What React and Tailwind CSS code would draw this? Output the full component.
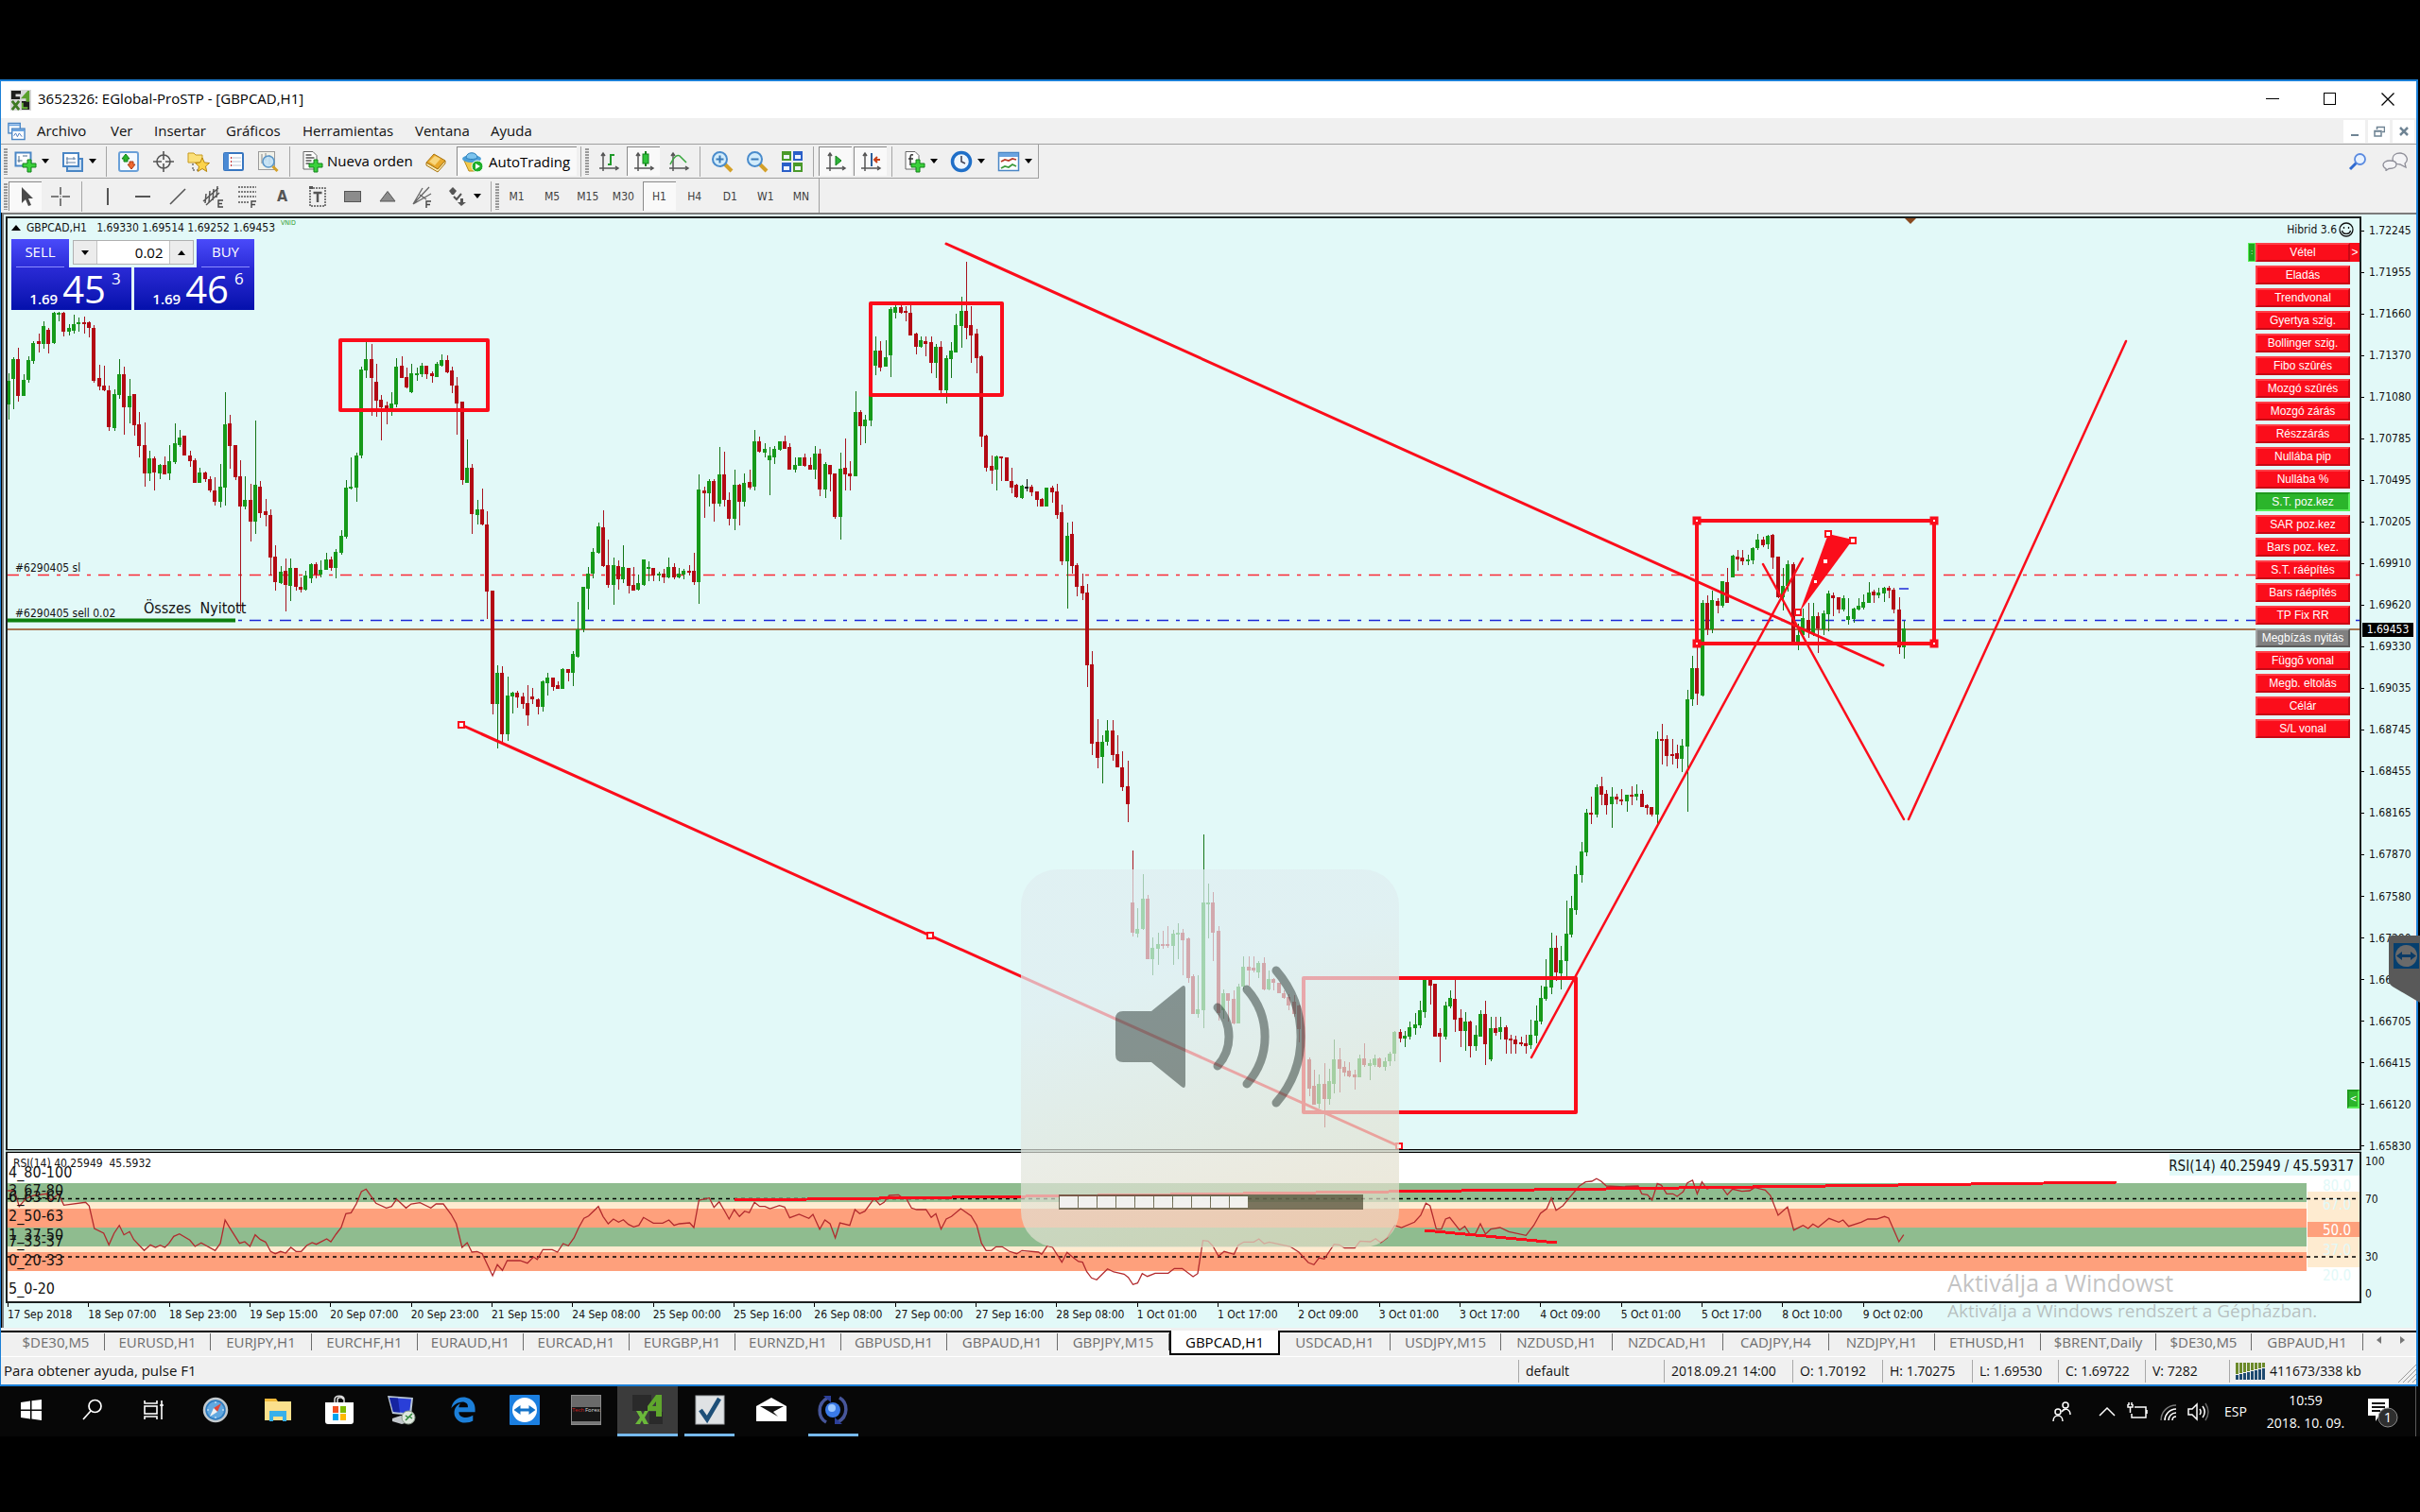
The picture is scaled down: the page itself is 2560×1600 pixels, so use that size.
import React from "react";
import { FaEdgeLegacy } from "react-icons/fa";

const UI = "font-['Open_Sans','Noto_Sans',sans-serif]";
const TAHOMA = "font-['DejaVu_Sans_Condensed','DejaVu_Sans',sans-serif]";

/* ---------- chart data ---------- */

const BAR_STEP = 16 / 3;
const FIRST_BAR = 8.6;

// colour, high, body top, body bottom, low. Every block has its own base and scale
const blocks = [
  {
    start: 0,
    base: 320,
    scale: 3,
    bars: `g225,248,323,372 g175,180,242,340 r144,180,296,316 g228,246,296,296 g172,184,246,255 g124,128,187,195 r100,124,132,158
      g60,76,132,148 r80,88,132,163 g30,32,128,132 g30,32,34,60 r30,32,93,108 g68,80,92,104 g40,68,90,100 g48,64,70,92 r46,64,68,100
      r60,64,82,112 r72,80,248,256 r198,240,268,280 r200,264,280,283 r264,280,396,407 g276,292,398,407 g180,228,294,307 r204,228,332,420
      g244,296,332,384 r292,292,391,424 r348,388,455,492 r380,452,543,584 g472,496,543,567 r488,496,540,596 g512,516,544,560
      r488,516,545,545 g452,504,544,563 g384,448,507,512 g404,428,452,460 r424,424,487,487 r472,485,504,523 r496,500,572,572
      g524,540,572,572 r536,540,561,570 r552,560,598,603 r556,596,632,644 g512,584,632,652 g284,388,587,644 r356,384,455,528
      r452,452,555,563 r500,552,648,980 g552,628,648,656 r576,628,696,760 g376,580,696,736 r568,584,668,684 r624,664,676,712
      r656,676,811,866 r772,808,887,915 g836,856,891,895 r812,852,896,980 g812,844,899,948 r844,844,904,915 r872,904,912,920
      g852,868,912,915 g828,832,875,891 r824,832,864,876 g820,848,864,872 g796,816,848,848 r808,816,844,852 g784,792,843,876
      g724,740,795,800 g564,588,743,751 g492,584,592,595 g476,485,587,632 g204,212,487,495 g126,180,215,240 r132,180,240,360
      r196,252,312,363 r295,308,332,437 r316,328,343,388 g284,320,343,360 g176,204,323,332 r172,200,240,240 r208,236,271,273
      g196,224,285,288 g208,224,228,248 g192,200,228,236 r200,200,228,244 r220,224,235,256 g188,196,236,236 g164,184,200,204
      r168,184,222,224 r204,216,264,288 r236,264,320,420 r316,316,564,580 g436,524,572,572 r512,524,672,736 g628,656,675,704
      r592,656,704,708 r664,704,919,1004 r916,916,1276,1308 g1152,1176,1276,1415 r1156,1176,1370,1395 g1188,1248,1370,1391
      g1236,1240,1250,1304 r1232,1240,1255,1288 r1240,1252,1276,1291 r1216,1272,1311,1343 r1224,1252,1260,1276 r1256,1260,1284,1308
      g1200,1204,1284,1300 g1176,1192,1208,1248 r1192,1192,1220,1232 r1204,1216,1227,1228 g1160,1164,1227,1228 r1164,1164,1176,1204
      g1108,1116,1175,1219 g952,1037,1124,1128 g904,904,1037,1048 g840,860,908,976 g780,792,862,875 g700,712,795,797`,
  },
  {
    start: 118,
    base: 240,
    scale: 2.45,
    bars: `r736,778,880,882 r810,876,928,937 g858,876,928,980 r866,880,914,942 g826,882,914,924 r884,884,930,951 r882,928,943,943
      g902,924,941,944 g862,862,928,931 g868,882,888,918 r884,884,904,918 g894,898,904,918 r886,898,908,924 g858,882,908,912
      r872,882,908,914 g884,898,908,911 g888,892,902,914 r876,891,894,904 r846,892,920,928 g643,682,920,977 r673,684,692,755
      g654,660,692,725 r654,660,718,764 g572,643,718,724 r582,643,709,724 r688,707,757,773 g630,670,757,787 r666,670,714,774
      g640,663,714,725 r630,662,676,680 g526,556,673,683 r545,555,582,586 g562,576,586,598 g572,594,604,696 g568,576,598,614
      g555,556,578,581 r541,555,575,575 r562,572,630,630 g599,617,630,636 g598,598,620,620 r588,598,620,622 r598,617,630,630
      g568,588,630,655 r575,588,680,699 g611,616,680,702 r617,617,643,686 r640,640,751,757 g585,626,751,810 r548,624,643,683
      r607,640,647,683 g427,480,646,647 r476,480,518,565 g488,500,518,562 g430,437,502,518 g284,320,359,385 r297,320,364,376
      g294,337,362,362 g208,212,332,389 g202,208,223,238 r202,208,223,225 r206,218,224,244 r202,222,281,281 r275,278,310,330
      g284,294,310,314 r284,296,304,336 r284,300,352,379 g304,310,352,391 r296,310,424,432 g332,341,424,457 g300,320,343,391
      g225,255,326,326 g182,219,258,314 r91,219,261,291 r206,255,281,353 r265,278,340,379 r333,336,545,572 r539,541,624,634
      r594,620,633,666 g594,595,630,683 r595,595,600,659 r598,598,660,660 r624,660,676,692 r666,670,701,703 g670,672,702,706
      k654,674,677,686 r670,673,689,699 r686,686,708,725 r702,706,725,725 g676,677,724,725 r672,676,689,715 r666,686,748,757
      r721,741,868,876 g768,800,868,990 r764,797,880,898 r872,876,934,957 r898,932,951,967 r925,948,1137,1192 r1101,1134,1339,1369
      r1276,1336,1378,1404 g1317,1336,1374,1443 g1280,1307,1336,1345 r1280,1307,1369,1385 r1317,1366,1401,1401 r1359,1401,1453,1463
      r1385,1450,1496,1544`,
  },
  {
    start: 223,
    base: 860,
    scale: 3,
    bars: `r120,284,380,392 g304,368,384,396 g196,272,368,372 r260,272,464,464 g396,430,464,516 g380,416,432,484 r376,416,420,432
      r360,418,424,430 g372,384,424,484 g352,380,388,464 r368,380,404,516 r396,400,524,540 r512,520,640,640 g516,624,640,652
      g68,284,627,684 g224,284,288,400 r252,284,380,472 r360,376,636,660 g560,572,628,655 r572,572,596,664 r564,592,668,672
      g544,552,668,670 g456,488,552,560 r456,488,500,548 r456,492,500,508 g472,476,508,525 r460,476,560,564 g500,528,560,564
      r524,528,540,564 r540,540,572,572 r564,572,588,592 r576,585,612,628 r580,600,640,648 r608,612,688,728 r688,690,780,800
      r776,784,876,900 r816,868,928,928 g832,860,924,940 r796,860,908,1000 g812,852,908,928 g720,784,860,892 r748,784,812,888
      r788,808,824,836 r792,820,836,840 r816,832,840,880 g768,780,840,840 r732,780,800,808 g784,796,804,848 g768,780,800,808
      r776,780,808,810 g776,788,808,820 g760,764,790,804 g692,696,764,788 r688,696,716,730 g692,708,716,743 g664,680,710,720
      g636,672,684,704 g596,628,676,684 g530,530,632,652 r530,532,548,608 r544,544,710,712 r684,700,711,792 g600,612,712,720
      g564,588,616,620 r528,592,656,696 r624,652,692,744 g632,664,692,756 r660,664,740,776 g676,704,740,756 g628,640,711,712
      r596,640,736,800 g648,684,784,788 r648,684,700,708 g648,680,696,720 r676,680,720,764 r704,716,724,764 r708,720,734,764
      r712,728,736,740 r704,732,740,764`,
  },
  {
    start: 302,
    base: 500,
    scale: 2.376,
    bars: `g1375,1413,1440,1450 g1340,1378,1415,1435 g1289,1320,1381,1387 g1223,1292,1324,1327 g1156,1194,1295,1311 r1165,1194,1257,1279
      g1190,1226,1260,1299 g1077,1159,1228,1267 g1064,1096,1162,1168 g988,1010,1099,1112 g928,953,1013,1032 g846,856,956,965
      r814,855,860,884 g785,792,860,868 r764,789,811,836 r798,808,836,859 g792,814,833,893 r809,814,823,833 r795,821,825,837
      g811,811,826,852 r789,811,816,836 g785,808,814,824 r798,808,842,842 r834,836,843,859 r840,842,861,865 g652,669,860,890
      r633,671,674,735 r661,671,713,738 r671,709,713,735 r684,706,721,744 g669,687,721,754 g547,570,690,852 g462,491,570,588
      r430,491,557,585 g320,329,560,564 r310,329,395,408 g298,320,395,403 r317,323,335,354 g273,273,335,340 r241,276,329,329
      g206,209,263,263 r196,211,218,247 r196,214,224,234 g206,219,224,234 g187,189,221,231 g155,168,190,194 r162,168,184,187
      g158,160,181,193 r155,158,214,243 r212,212,314,316 g241,285,314,348 g222,231,285,300 r225,231,425,428 g380,408,431,446
      g342,367,409,418 r329,370,400,415 g329,361,405,412 r352,361,393,453 g348,355,395,409 g298,304,357,400 r301,308,316,361
      r314,314,345,354 g310,317,344,350 g317,361,370,382 g339,342,368,377 g317,336,344,347 g307,326,340,345 g276,301,328,328
      r295,299,308,329 g291,302,308,316 g288,291,304,326 r285,291,297,316 r291,295,345,354 r314,345,440,456 g373,393,440,468`,
  },
];

const candles = blocks.flatMap(({ start, base, scale, bars }) =>
  bars.split(/\s+/).map((bar, i) => {
    const [high, top, bottom, low] = bar
      .slice(1)
      .split(",")
      .map((v) => Math.round(base + Number(v) / scale));
    return { x: Math.round(FIRST_BAR + (start + i) * BAR_STEP), kind: bar[0], high, top, bottom, low };
  })
);

const candleFill = { g: "#169a1a", r: "#b30a14", k: "#111111" };
const candleWick = { g: "#147518", r: "#a8141e", k: "#111111" };

// [x origin, points]
const rsiParts = [
  [
    0,
    `15,180 28,180 37,230 50,205 65,195 90,190 98,210 113,190 123,226 165,217 172,228 182,300 200,315 210,352 220,315 230,290 239,320
     250,310 258,335 278,370 290,352 300,360 309,353 318,360 326,347 335,325 346,317 366,337 376,357 388,346 415,370 425,347 434,273
     442,295 462,347 472,342 482,357 492,320 502,335 512,343 522,373 531,380 541,373 551,378 561,360 571,373 581,373 592,353 602,345
     610,350 630,333 638,342 648,318 658,297 667,253 677,250 687,222 697,183 706,175 725,220 745,235 755,230 765,207 783,235 793,222
     810,218 831,235 841,222 855,222 870,255 880,285 891,360 901,345 910,375 920,373 930,380 950,450 959,415 969,433 978,402 1003,402
     1017,410 1029,390 1036,398 1047,367 1065,367 1075,375 1086,348 1096,355 1107,330 1116,297 1126,268 1135,260 1154,230 1163,262
     1173,285 1183,270 1193,280 1202,272 1212,287 1222,295 1232,290 1241,265 1260,283 1278,283 1290,273 1300,290 1310,285 1330,282
     1338,297 1348,210 1368,203 1377,233 1387,215 1397,243 1406,270 1416,240 1426,262 1436,245 1445,250 1455,217 1465,230 1475,230
     1485,237 1503,227 1513,232 1523,266 1541,255 1560,268`,
  ],
  [
    860,
    `0,255 13,302 23,273 33,285 43,330 52,282 71,290 81,240 90,253 100,245 118,205 129,225 137,217 147,195 165,193 172,202 180,205
     190,235 200,240 218,240 228,265 237,253 247,302 257,270 267,262 285,237 305,260 316,290 325,347 334,370 344,370 353,358 365,358
     378,372 393,380 403,370 435,375 441,382 452,355 462,360 480,407 490,376 500,390 512,405 520,407 528,437 537,457 547,463 568,428
     580,438 600,445 608,455 617,478 626,473 635,443 645,452 660,442 685,442 697,427 712,427 733,453 742,443 752,338 762,340 771,355
     782,388 793,373 812,382 820,353 831,343 850,343 860,333 870,348 880,343 905,352 920,357 937,375 955,408 966,415 976,393 986,397
     1005,350 1015,352 1025,362 1045,362 1055,340 1075,342 1085,332 1095,345 1107,330 1122,290 1135,297 1160,280 1172,258 1182,220
     1190,228 1202,302 1212,302 1220,270 1228,265 1247,305 1257,293 1267,318 1277,318 1287,285 1297,318 1307,302 1325,297 1342,310
     1375,322 1390,290 1403,252 1415,237 1424,203 1433,242 1446,228 1460,200 1478,165 1490,152 1502,150 1511,142 1520,150 1530,165 1565,168`,
  ],
  [
    1700,
    `36,166 60,165 67,190 78,193 87,210 97,157 105,163 115,190 127,190 135,198 147,183 155,155 165,147 174,190 183,152 193,175 203,168
     222,170 232,193 242,175 260,182 275,180 285,170 305,178 315,195 330,258 348,232 360,305 378,290 388,300 397,286 407,296 428,268
     447,280 455,273 466,293 490,280 503,270 520,270 535,262 543,267 563,342 572,320`,
  ],
];

const rsiPoints = rsiParts
  .flatMap(([x0, pts]) =>
    pts.split(/\s+/).map((p) => {
      const [x, y] = p.split(",").map(Number);
      return `${(x0 + x / 1.823).toFixed(1)},${(1200 + y / 3).toFixed(1)}`;
    })
  )
  .join(" ");

const prices = [
  "1.72245", "1.71955", "1.71660", "1.71370", "1.71080", "1.70785", "1.70495", "1.70205",
  "1.69910", "1.69620", "1.69330", "1.69035", "1.68745", "1.68455", "1.68165", "1.67870",
  "1.67580", "1.67290", "1.66995", "1.66705", "1.66415", "1.66120", "1.65830",
];

const times = [
  "17 Sep 2018", "18 Sep 07:00", "18 Sep 23:00", "19 Sep 15:00", "20 Sep 07:00", "20 Sep 23:00",
  "21 Sep 15:00", "24 Sep 08:00", "25 Sep 00:00", "25 Sep 16:00", "26 Sep 08:00", "27 Sep 00:00",
  "27 Sep 16:00", "28 Sep 08:00", "1 Oct 01:00", "1 Oct 17:00", "2 Oct 09:00", "3 Oct 01:00",
  "3 Oct 17:00", "4 Oct 09:00", "5 Oct 01:00", "5 Oct 17:00", "8 Oct 10:00", "9 Oct 02:00",
];

const panelButtons = [
  "Vétel", "Eladás", "Trendvonal", "Gyertya szig.", "Bollinger szig.", "Fibo szûrés", "Mozgó szûrés",
  "Mozgó zárás", "Részzárás", "Nullába pip", "Nullába %", "S.T. poz.kez", "SAR poz.kez", "Bars poz. kez.",
  "S.T. ráépítés", "Bars ráépítés", "TP Fix RR", "Megbízás nyitás", "Függõ vonal", "Megb. eltolás",
  "Célár", "S/L vonal",
];

const tabs = [
  ["$DE30,M5", "w-[103px]"], ["EURUSD,H1", "w-28"], ["EURJPY,H1", "w-[107px]"], ["EURCHF,H1", "w-28"],
  ["EURAUD,H1", "w-28"], ["EURCAD,H1", "w-28"], ["EURGBP,H1", "w-28"], ["EURNZD,H1", "w-28"],
  ["GBPUSD,H1", "w-28"], ["GBPAUD,H1", "w-[117px]"], ["GBPJPY,M15", "w-[118px]"], ["GBPCAD,H1", "w-[117px]"],
  ["USDCAD,H1", "w-[117px]"], ["USDJPY,M15", "w-[117px]"], ["NZDUSD,H1", "w-[118px]"], ["NZDCAD,H1", "w-[117px]"],
  ["CADJPY,H4", "w-28"], ["NZDJPY,H1", "w-28"], ["ETHUSD,H1", "w-28"], ["$BRENT,Daily", "w-[122px]"],
  ["$DE30,M5", "w-[101px]"], ["GBPAUD,H1", "w-[118px]"],
];

/* ---------- toolbar icons ---------- */

const Icon = ({ children, size = "h-6 w-6" }) => (
  <svg viewBox="0 0 24 24" className={`${size} shrink-0`} fill="none" aria-hidden="true">
    {children}
  </svg>
);

const Plus = () => (
  <path d="M14 10h4v4h5v4h-5v5h-4v-5H9v-4h5z" fill="#3bd13b" stroke="#12801a" />
);

const Axes = () => <path d="M6 3v19M2 19h20M4 6l2-3 2 3M19 17l3 2-3 2" stroke="#555" strokeWidth="1.5" />;

const icons = {
  newChart: (
    <Icon>
      <rect x="1.5" y="2.5" width="16" height="14" fill="#fff" stroke="#4a86c5" strokeWidth="2" />
      <path d="M5 6v7M3.500 11h5M9 6h5" stroke="#4a6a8a" />
      <Plus />
    </Icon>
  ),
  profiles: (
    <Icon>
      <rect x="6" y="9" width="16" height="13" fill="#c9def2" stroke="#4a86c5" strokeWidth="2" />
      <rect x="2" y="3" width="16" height="14" fill="#fff" stroke="#4a86c5" strokeWidth="2" />
      <path d="M5 9h10M5 13h10M6 7v8M13 7v3" stroke="#5d7fa5" />
    </Icon>
  ),
  market: (
    <Icon>
      <rect x="2" y="2" width="20" height="20" rx="2" fill="#f4f9ff" stroke="#6aa0d8" strokeWidth="2" />
      <path d="M9 4l4 5h-2v3H7V9H5z" fill="#28b428" stroke="#12801a" />
      <path d="M15 20l-4-5h2v-3h4v3h2z" fill="#f06a30" stroke="#b03a10" />
    </Icon>
  ),
  crosshair: (
    <Icon>
      <circle cx="12" cy="12" r="7" stroke="#555" strokeWidth="1.6" />
      <path d="M12 1v9M12 14v9M1 12h9M14 12h9" stroke="#555" strokeWidth="1.6" />
    </Icon>
  ),
  favorites: (
    <Icon>
      <path d="M1 3h6l2 2h7v8H1z" fill="#fbe07a" stroke="#c79a20" />
      <path d="M6 14v8M6 21h5" stroke="#333" strokeDasharray="2 2" />
      <path d="M16 8l2.300 5 5.200.5-4 3.500 1.200 5.500-4.700-3-4.700 3 1.200-5.500-4-3.500 5.200-.5z" fill="#fcd34a" stroke="#b8860b" />
    </Icon>
  ),
  navigator: (
    <Icon>
      <rect x="2" y="3" width="20" height="18" rx="1" fill="#fff" stroke="#3776c0" strokeWidth="2" />
      <path d="M2 3h5v18H2z" fill="#4a8ad4" />
      <path d="M10 8h10M10 12h10M10 16h10" stroke="#b8c4d4" />
      <path d="M9 8h1M9 12h1M9 16h1" stroke="#d03030" strokeWidth="2" />
    </Icon>
  ),
  tester: (
    <Icon>
      <rect x="1.500" y="1.500" width="17" height="19" fill="#f2f2ea" stroke="#9a9a9a" />
      <path d="M5 4v10M9 3v8M13 5v10" stroke="#888" />
      <circle cx="12" cy="12" r="6" fill="#bfe0f6" fillOpacity=".85" stroke="#5a96c8" strokeWidth="1.600" />
      <path d="M16.500 17l5 5" stroke="#d4a028" strokeWidth="3" />
    </Icon>
  ),
  order: (
    <Icon>
      <path d="M3 1.500h10l4 4V20H3z" fill="#fff" stroke="#666" />
      <path d="M5.500 5h6M5.500 8h9M5.500 11h6M5.500 14h4" stroke="#555" strokeWidth="1.500" />
      <Plus />
    </Icon>
  ),
  book: (
    <Icon>
      <path d="M2 13l8-9 12 7-8 9z" fill="#e9a92c" stroke="#a87410" />
      <path d="M5 12l6-6 6 3-6 7z" fill="#f8d67c" />
      <path d="M2 13l12 7 8-9v3l-8 9-12-7z" fill="#fbeab0" stroke="#a87410" />
    </Icon>
  ),
  auto: (
    <Icon>
      <path d="M3 11h16l-4 11H8z" fill="#f2c94c" stroke="#b88a1a" />
      <ellipse cx="11" cy="9" rx="10" ry="4" fill="#4a9fd8" />
      <path d="M5 8c0-7 12-7 12 0-3 2-9 2-12 0z" fill="#7cc4ee" stroke="#2f7fb8" />
      <circle cx="17" cy="17" r="6" fill="#1fae2a" stroke="#fff" />
      <path d="M15 14v6l5-3z" fill="#fff" />
    </Icon>
  ),
  bars: (
    <Icon>
      <Axes />
      <path d="M14 4v12M14 5h4M11 15h3" stroke="#1f9a2a" strokeWidth="2" />
    </Icon>
  ),
  candle: (
    <Icon>
      <Axes />
      <path d="M14 1v16" stroke="#12801a" strokeWidth="2" />
      <rect x="11" y="4" width="6" height="10" fill="#2fc43a" stroke="#12801a" />
    </Icon>
  ),
  line: (
    <Icon>
      <Axes />
      <path d="M3 15c4-8 8-12 11-8l6 6" stroke="#3aa83f" strokeWidth="1.600" />
    </Icon>
  ),
  zoomIn: (
    <Icon>
      <path d="M14 14l8 8" stroke="#d4a028" strokeWidth="4" />
      <circle cx="9.500" cy="9.500" r="7.500" fill="#d2ecfb" stroke="#4a8ccc" strokeWidth="2" />
      <path d="M5.500 9.500h8M9.500 5.500v8" stroke="#3a7ab8" strokeWidth="2" />
    </Icon>
  ),
  zoomOut: (
    <Icon>
      <path d="M14 14l8 8" stroke="#d4a028" strokeWidth="4" />
      <circle cx="9.500" cy="9.500" r="7.500" fill="#d2ecfb" stroke="#4a8ccc" strokeWidth="2" />
      <path d="M5.500 9.500h8" stroke="#3a7ab8" strokeWidth="2" />
    </Icon>
  ),
  tile: (
    <Icon>
      <path d="M1 1h10v10H1zM13 13h10v10H13z" fill="#4a9a2a" />
      <path d="M13 1h10v10H13zM1 13h10v10H1z" fill="#2a5fc8" />
      <path d="M3 5h6v4H3zM15 5h6v4h-6zM3 17h6v4H3zM15 17h6v4h-6z" fill="#eef4ff" />
    </Icon>
  ),
  scroll: (
    <Icon>
      <Axes />
      <path d="M12 6v10l6-5z" fill="#2fb43a" stroke="#12801a" />
    </Icon>
  ),
  shift: (
    <Icon>
      <Axes />
      <path d="M13 3v14" stroke="#2a5f9a" strokeWidth="2" />
      <path d="M22 10h-6M19 7l-3 3 3 3" stroke="#c84018" strokeWidth="2" />
    </Icon>
  ),
  indicators: (
    <Icon>
      <path d="M3 1.500h10l4 4V20H3z" fill="#fff" stroke="#666" />
      <path d="M11 5c-3-1-3 1-3 4v7M6 9h5" stroke="#333" strokeWidth="1.500" />
      <Plus />
    </Icon>
  ),
  clock: (
    <Icon>
      <circle cx="12" cy="12" r="9.500" fill="#eef6fd" stroke="#1f6fc8" strokeWidth="3.500" />
      <path d="M12 6v6l4 2" stroke="#445" strokeWidth="1.600" />
    </Icon>
  ),
  template: (
    <Icon>
      <rect x="1.500" y="2.500" width="21" height="19" fill="#fff" stroke="#4a86c5" strokeWidth="1.500" />
      <path d="M2 3h20v4H2z" fill="#6aa4e0" />
      <path d="M4 12l4-2 4 1 4-2 4 1" stroke="#b83a28" strokeWidth="1.800" />
      <path d="M4 19l4-2 4 1 4-3 4 2" stroke="#3a9a3a" strokeWidth="1.800" />
    </Icon>
  ),
  cursor: (
    <Icon>
      <path d="M8 2v17l4-4 3 7 3-1-3-7h5z" fill="#4a4a4a" />
    </Icon>
  ),
  cross: (
    <Icon>
      <path d="M12 2v8M12 14v8M2 12h8M14 12h8M12 11.500v1" stroke="#555" strokeWidth="1.500" />
    </Icon>
  ),
  vline: <Icon><path d="M12 3v18" stroke="#555" strokeWidth="2" /></Icon>,
  hline: <Icon><path d="M4 12h16" stroke="#555" strokeWidth="2" /></Icon>,
  trend: <Icon><path d="M4 20L20 4" stroke="#555" strokeWidth="1.600" /></Icon>,
  channel: (
    <Icon>
      <path d="M2 17L18 3M5 21L19 8M5 9l-1 10M9 6l-1 12M13 4l-1 12M17 1l-1 12" stroke="#555" strokeWidth="1.500" />
      <path d="M23 16h-5v7h5M18 19.500h4" stroke="#444" strokeWidth="1.400" />
    </Icon>
  ),
  fibo: (
    <Icon>
      <path d="M2 2h19M2 7h19M2 12h19M2 18h11" stroke="#555" strokeWidth="1.500" strokeDasharray="2 1" />
      <path d="M16 24v-7h5M16 20.500h4" stroke="#444" strokeWidth="1.400" />
    </Icon>
  ),
  label: (
    <Icon>
      <rect x="4" y="3" width="16" height="19" stroke="#555" strokeWidth="1.500" strokeDasharray="2 1" />
      <path d="M7.500 8h9M12 8v10" stroke="#555" strokeWidth="2.500" />
      <path d="M3 1h4v3H3z" fill="#555" />
    </Icon>
  ),
  rect: <Icon><rect x="3.500" y="6.500" width="17" height="11" fill="#8c8c8c" stroke="#555" /></Icon>,
  triangle: <Icon><path d="M12 6.500L20 17H4z" fill="#8c8c8c" stroke="#555" /></Icon>,
  fan: (
    <Icon>
      <path d="M2 20L19 2M2 20L12 3M2 20L21 9M9 10l7 5" stroke="#666" strokeWidth="1.300" />
      <path d="M16 24v-7h5M16 20.500h4" stroke="#444" strokeWidth="1.400" />
    </Icon>
  ),
  arrows: (
    <Icon>
      <path d="M7 2l4 4-3 4H6L3 6zM16 22l-4-4h3v-4h3v4h3z" fill="#555" />
      <path d="M8 12l3 3 5-6" stroke="#555" strokeWidth="2" />
    </Icon>
  ),
};

const Caret = () => (
  <svg viewBox="0 0 8 5" className="h-[5px] w-2 shrink-0" aria-hidden="true">
    <path d="M0 0h8L4 5z" fill="#000" />
  </svg>
);

const Grip = () => (
  <span className="h-7 w-1 shrink-0 bg-[repeating-linear-gradient(to_bottom,#9a9a9a_0_2px,transparent_2px_3px)]" />
);

const Sep = () => <span className="mx-1 h-8 w-px shrink-0 bg-[#a5a5a5]" />;

const Tool = ({ icon, label, pressed, drop, text }) => (
  <button
    type="button"
    aria-label={label}
    className={`mx-px flex h-[31px] shrink-0 items-center justify-center ${drop ? "w-12 gap-[5px]" : "w-[35px]"} ${
      pressed ? "border-t border-l border-[#8a8a8a] bg-[#f9f9f9]" : ""
    }`}
  >
    {text ? <span className="text-[12px] text-[#404040]">{text}</span> : icons[icon]}
    {drop && <Caret />}
  </button>
);

const TitleBar = () => (
  <header className="flex h-[39px] items-center bg-white pl-[10px]">
    <svg viewBox="0 0 24 24" className="h-6 w-[22px]" aria-hidden="true">
      <rect width="24" height="24" fill="#d8d8d8" />
      <path d="M1 1h11v4H6v3h5v3H1zM13 13h9v10h-9z" fill="#1d1d1b" />
      <path d="M20 1l-8 9h6v4h4V1z" fill="#5aa02c" />
      <path d="M2 13l8 10M10 13L2 23" stroke="#3f7a22" strokeWidth="3" />
      <path d="M14 15v6h6" stroke="#6ab83a" strokeWidth="2" fill="none" />
    </svg>
    <h1 className="ml-[7px] pb-0.5 text-[15px] text-black">3652326: EGlobal-ProSTP - [GBPCAD,H1]</h1>
    <div className="ml-auto flex items-center pb-0.5">
      <button type="button" aria-label="Minimizar" className="flex h-9 w-[61px] items-center justify-center">
        <span className="h-px w-[14px] bg-black" />
      </button>
      <button type="button" aria-label="Maximizar" className="flex h-9 w-[61px] items-center justify-center">
        <span className="h-[13px] w-[13px] border border-black" />
      </button>
      <button type="button" aria-label="Cerrar" className="flex h-9 w-[61px] items-center justify-center">
        <svg viewBox="0 0 14 14" className="h-[14px] w-[14px]">
          <path d="M.5.500l13 13M13.500.500l-13 13" stroke="#000" strokeWidth="1.300" />
        </svg>
      </button>
    </div>
  </header>
);

const menuItems = [
  ["Archivo", "w-[78px]"], ["Ver", "w-[46px]"], ["Insertar", "w-[76px]"], ["Gráficos", "w-[81px]"],
  ["Herramientas", "w-[119px]"], ["Ventana", "w-20"], ["Ayuda", "w-16"],
];

const MenuBar = () => (
  <nav className="flex h-7 items-center border-b border-[#a0a0a0] bg-[#f0f0f0] pl-[7px]">
    <svg viewBox="0 0 20 20" className="mr-3 h-5 w-[19px]" aria-hidden="true">
      <rect x="1" y="1" width="13" height="11" fill="#fff" stroke="#4a86c5" strokeWidth="1.500" />
      <rect x="5" y="7" width="14" height="12" fill="#fff" stroke="#4a86c5" strokeWidth="1.500" />
      <path d="M7 15l2-3 2 4 2-4 3 4" stroke="#4a7ac0" fill="none" />
      <path d="M1 3h13M5 9h14" stroke="#6aa4e0" strokeWidth="2" />
    </svg>
    {menuItems.map(([item, width]) => (
      <button key={item} type="button" className={`${width} text-left text-[15px] leading-none text-[#111]`}>
        {item}
      </button>
    ))}
    <div className="ml-auto flex gap-[3px] pr-0.5">
      <button type="button" aria-label="Minimizar ventana" className="flex h-6 w-[23px] items-end justify-center bg-white pb-[7px]">
        <span className="h-0.5 w-2 bg-[#6f8494]" />
      </button>
      <button type="button" aria-label="Restaurar ventana" className="flex h-6 w-[23px] items-center justify-center bg-white">
        <svg viewBox="0 0 12 12" className="h-3 w-3" fill="none" stroke="#6f8494" strokeWidth="1.500">
          <path d="M3.500 4V1.500h8v5H9M1 5.500h7V11H1zM1 6h7" />
        </svg>
      </button>
      <button type="button" aria-label="Cerrar ventana" className="flex h-6 w-[23px] items-center justify-center bg-white">
        <svg viewBox="0 0 10 10" className="h-[10px] w-[10px]">
          <path d="M1 1l8 8M9 1L1 9" stroke="#6f8494" strokeWidth="2.500" />
        </svg>
      </button>
    </div>
  </nav>
);

const Toolbars = () => (
  <>
    <div className="flex h-9 items-center bg-[#f0f0f0] pl-[3px]">
      <div className="flex h-full items-center border-r border-b border-[#a0a0a0]">
        <Grip />
        <Tool icon="newChart" label="Nuevo gráfico" drop />
        <Tool icon="profiles" label="Perfiles" drop />
        <Sep />
        <Tool icon="market" label="Observación del mercado" />
        <Tool icon="crosshair" label="Ventana de datos" />
        <Tool icon="favorites" label="Navegador" />
        <Tool icon="navigator" label="Terminal" />
        <Tool icon="tester" label="Probador de estrategias" />
        <Sep />
        <button type="button" className="mx-px flex h-[31px] w-[129px] items-center gap-1 pl-[6px] text-[15px]">
          {icons.order}
          <span className="whitespace-nowrap">Nueva orden</span>
        </button>
        <Tool icon="book" label="MetaEditor" />
        <button
          type="button"
          className="ml-1 flex h-[31px] w-[127px] items-center gap-[5px] border-t border-l border-[#8a8a8a] bg-[#f9f9f9] pl-1 text-[15px]"
        >
          {icons.auto}
          AutoTrading
        </button>
        <Sep />
        <Grip />
        <span className="w-0.5" />
        <Tool icon="bars" label="Gráfico de barras" />
        <Tool icon="candle" label="Velas japonesas" pressed />
        <Tool icon="line" label="Gráfico de línea" />
        <Sep />
        <Tool icon="zoomIn" label="Aumentar" />
        <Tool icon="zoomOut" label="Disminuir" />
        <Tool icon="tile" label="Mosaico" />
        <Sep />
        <Tool icon="scroll" label="Desplazamiento automático" pressed />
        <Tool icon="shift" label="Desplazar fin del gráfico" pressed />
        <Sep />
        <Tool icon="indicators" label="Indicadores" drop />
        <Tool icon="clock" label="Periodos" drop />
        <Tool icon="template" label="Plantillas" drop />
      </div>
      <div className="ml-auto flex items-center gap-4 pr-2">
        <button type="button" aria-label="Buscar">
          <svg viewBox="0 0 20 20" className="h-5 w-5" fill="none">
            <path d="M2 18l7-7" stroke="#2f6ad0" strokeWidth="3" />
            <circle cx="12.500" cy="7.500" r="5.500" fill="#e8f2ff" stroke="#5a8ae0" strokeWidth="1.800" />
          </svg>
        </button>
        <button type="button" aria-label="Comunidad">
          <svg viewBox="0 0 28 20" className="h-5 w-7" fill="#f4f4f6" stroke="#8e8e98" strokeWidth="1.300">
            <path d="M19 1c-5 0-8 2.500-8 6s3 6 8 6l6 3-1-4c5-4 1-11-5-11z" />
            <path d="M8 9c-4 0-7 2-7 4.500 0 2 1 3 3 4v2l3-2c5 0 8-2 8-4.500S12 9 8 9z" />
          </svg>
        </button>
      </div>
    </div>
    <div className="flex h-9 items-center bg-[#f0f0f0] pl-[3px]">
      <div className={`flex h-full items-center border-r border-[#a0a0a0] pt-px ${TAHOMA}`}>
        <Grip />
        <Tool icon="cursor" label="Cursor" pressed />
        <Tool icon="cross" label="Cruz" />
        <Sep />
        <span className="w-1" />
        <Tool icon="vline" label="Línea vertical" />
        <Tool icon="hline" label="Línea horizontal" />
        <Tool icon="trend" label="Línea de tendencia" />
        <Tool icon="channel" label="Canal equidistante" />
        <Tool icon="fibo" label="Fibonacci" />
        <Tool text={<b className="text-[16px] font-semibold text-[#555]">A</b>} label="Texto" />
        <Tool icon="label" label="Etiqueta" />
        <Tool icon="rect" label="Rectángulo" />
        <Tool icon="triangle" label="Triángulo" />
        <Tool icon="fan" label="Abanico" />
        <Tool icon="arrows" label="Flechas" drop />
        <Sep />
        <Grip />
        <div className="flex w-[338px] justify-between">
          {["M1", "M5", "M15", "M30", "H1", "H4", "D1", "W1", "MN"].map((tf) => (
            <Tool key={tf} text={tf} label={tf} pressed={tf === "H1"} />
          ))}
        </div>
      </div>
    </div>
  </>
);

/* ---------- chart ---------- */

const Handle = ({ x, y }) => (
  <rect x={x - 3} y={y - 3} width="6" height="6" fill="#fff" stroke="#fb0d1b" strokeWidth="2" />
);

const PriceChart = () => (
  <svg
    viewBox="8 231 2488 985"
    preserveAspectRatio="none"
    className="block h-[985px] w-full bg-[#e2f9f8]"
    role="img"
    aria-label="GBPCAD H1"
  >
    <g fill="none" strokeWidth="1.500">
      <path d="M8 608.500H2496" stroke="#fb2a35" strokeDasharray="12 8 4 8" />
      <path d="M8 656.500H2496" stroke="#1c28d8" strokeDasharray="12 8 4 8" />
      <path d="M8 666H2496" stroke="#a87450" strokeWidth="2" />
    </g>
    <g shapeRendering="crispEdges">
      {candles.map((c) => (
        <g key={c.x}>
          <rect x={c.x - 0.5} y={c.high} width="1" height={Math.max(c.low - c.high, 1)} fill={candleWick[c.kind]} />
          <rect
            x={c.x - 2}
            y={c.top}
            width="4"
            height={Math.max(c.bottom - c.top, 2)}
            fill={candleFill[c.kind]}
          />
        </g>
      ))}
    </g>
    <path d="M8 656.500H249" stroke="#0e800e" strokeWidth="4" />
    <path d="M2009 623H2019" stroke="#1c28d8" strokeWidth="1.500" />
    <path d="M2015 231h12l-6 6z" fill="#8a4a20" />
    <g fill="none" stroke="#fb0d1b" strokeWidth="4" strokeLinejoin="round">
      <rect x="360" y="360" width="156" height="74" />
      <rect x="921" y="321" width="139" height="97" />
      <rect x="1379" y="1035" width="288" height="142" />
      <rect x="1795" y="551" width="251" height="130" />
    </g>
    <g stroke="#fb0d1b" strokeLinecap="round">
      <path d="M1001 258L1992 704M488 767L1480 1213" strokeWidth="3" />
      <path d="M1620 1119L1907 591M1865 597L2014 867M2019 867L2249 361" strokeWidth="2.500" />
    </g>
    <path d="M1934 565L1960 571L1904 647z" fill="#fb0d1b" />
    <path d="M1929 592h4v4h-4zM1919 614h3v3h-3z" fill="#fff" />
    <g strokeWidth="2">
      <Handle x={1934} y={565} />
      <Handle x={1960} y={572} />
      <Handle x={1902} y={648} />
      <Handle x={488} y={767} />
      <Handle x={984} y={990} />
      <Handle x={1480} y={1213} />
    </g>
    {[[1795, 551], [2046, 551], [1795, 681], [2046, 681]].map(([x, y]) => (
      <g key={`${x}-${y}`}>
        <rect x={x - 4.5} y={y - 4.5} width="9" height="9" fill="#fb0d1b" />
        <rect x={x - 1} y={y - 1} width="2" height="2" fill="#fff" />
      </g>
    ))}
    <g className={TAHOMA} fill="#111">
      <text x="16" y="605" fontSize="12">#6290405 sl</text>
      <text x="16" y="653" fontSize="12">#6290405 sell 0.02</text>
      <text x="152" y="649" fontSize="16" xmlSpace="preserve">Összes  Nyitott</text>
    </g>
  </svg>
);

const QuickTrade = () => (
  <div className={`absolute top-[22px] left-1 w-[257px] text-white ${UI}`}>
    <div className="flex h-[30px] items-start justify-between">
      <button type="button" className="h-[30px] w-[61px] bg-linear-to-b from-[#4a4afa] to-[#2c2cd8] px-[5px] text-[15px]">
        <span className="block border-b border-[#8c8cff] pb-1 leading-6">SELL</span>
      </button>
      <div className="mt-px flex h-[26px] w-32 border border-[#b0b0b0] bg-white">
        <button type="button" aria-label="Reducir volumen" className="flex w-6 items-center justify-center bg-[#ececec]">
          <Caret />
        </button>
        <input
          aria-label="Volumen"
          defaultValue="0.02"
          className="w-[78px] border-x border-[#c4c4c4] pr-[6px] text-right text-[15px] text-black outline-none"
        />
        <button type="button" aria-label="Aumentar volumen" className="flex w-6 items-center justify-center bg-[#ececec]">
          <span className="rotate-180">
            <Caret />
          </span>
        </button>
      </div>
      <button type="button" className="h-[30px] w-[61px] bg-linear-to-b from-[#4a4afa] to-[#2c2cd8] px-[5px] text-[15px]">
        <span className="block border-b border-[#8c8cff] pb-1 leading-6">BUY</span>
      </button>
    </div>
    <div className="flex h-[45px] gap-[3px]">
      {[["45", "3"], ["46", "6"]].map(([big, small]) => (
        <div key={big} className="flex flex-1 items-end justify-center bg-linear-to-b from-[#2a2ad6] to-[#0410ac] pl-2">
          <span className="text-[15px] leading-6 font-semibold">1.69</span>
          <span className="ml-[5px] text-[40px] leading-11">{big}</span>
          <span className="ml-[6px] self-start text-[17px] leading-6">{small}</span>
        </div>
      ))}
    </div>
  </div>
);

const buttonTone = (name) => {
  if (name === "S.T. poz.kez") return "bg-[#2bb52b] border-[#1f9a1f] border-r-[#58ee58] border-b-[#58ee58]";
  if (name === "Megbízás nyitás") return "bg-[#808080] border-[#a4a4a4] border-r-[#5c5c5c] border-b-[#5c5c5c]";
  return "bg-[#fb0d1b] border-[#ff3f48] border-r-[#c80814] border-b-[#c80814]";
};

const StrategyPanel = () => (
  <div className="absolute top-1 right-0 font-['Liberation_Sans',sans-serif] text-[12px] text-white">
    <div className={`flex h-[22px] items-start justify-end gap-0.5 pr-[6px] leading-4 text-[#111] ${TAHOMA}`}>
      <span>Hibrid 3.6</span>
      <svg viewBox="0 0 16 16" className="h-4 w-4" fill="none" stroke="#111" strokeWidth="1.300">
        <circle cx="8" cy="8" r="7" />
        <path d="M3.500 9c1 4.500 8 4.500 9 0M5.500 5v2M10.500 5v2" />
      </svg>
    </div>
    <div className="flex">
      <button type="button" aria-label="Ocultar" className="h-5 w-2 border border-[#58ee58] bg-[#1fa51f] text-[8px] leading-4">
        :
      </button>
      <div className="flex w-[100px] flex-col gap-1">
        {panelButtons.map((name) => (
          <button
            key={name}
            type="button"
            className={`h-5 border-2 leading-4 whitespace-nowrap ${buttonTone(name)}`}
          >
            {name}
          </button>
        ))}
      </div>
      <button type="button" aria-label="Más" className="h-5 w-[10px] bg-[#fb0d1b] leading-5">
        &gt;
      </button>
    </div>
  </div>
);

const PriceAxis = () => (
  <div className="relative -mb-[5px] flex w-[58px] flex-col justify-between border-r-[3px] border-[#efefef] bg-[#e2f9f8] pt-[7px]">
    {prices.map((price) => (
      <div key={price} className="flex h-4 items-center gap-[5px] text-[12px] leading-4">
        <span className="h-px w-[3px] bg-black" />
        {price}
      </div>
    ))}
    <span className="absolute top-[430px] left-px w-[54px] bg-black text-center text-[12px] leading-[15px] text-white">
      1.69453
    </span>
  </div>
);

const rsiBands = [
  [1252, 1272, "#8fbc8f"],
  [1272, 1279, "#feebd0"],
  [1279, 1299, "#fea07c"],
  [1299, 1319, "#8fbc8f"],
  [1319, 1325, "#feebd0"],
  [1325, 1345, "#fea07c"],
];

const zoneLabels = [
  ["4_80-100", 1246],
  ["3_67-80", 1265],
  ["6_63-67", 1272],
  ["2_50-63", 1292],
  ["1_37-50", 1312],
  ["7_33-37", 1319],
  ["0_20-33", 1339],
  ["5_0-20", 1369],
];

const RsiChart = () => (
  <svg
    viewBox="8 1220 2488 157"
    preserveAspectRatio="none"
    className={`block h-[157px] w-full bg-white ${TAHOMA}`}
    role="img"
    aria-label="RSI(14)"
  >
    {rsiBands.map(([from, to, fill]) => (
      <rect key={from} x="8" y={from} width="2432" height={to - from} fill={fill} />
    ))}
    <rect x="2441" y="1261" width="55" height="80" fill="#feebd0" />
    <rect x="2441" y="1293" width="55" height="16" fill="#fea07c" />
    <g fontSize="15" fill="#e2f9f8" textAnchor="end">
      <text x="2487" y="1260">80.0</text>
      <text x="2487" y="1280">67.0</text>
      <text x="2487" y="1307" fill="#fff">50.0</text>
      <text x="2487" y="1328">37.0</text>
      <text x="2487" y="1355">20.0</text>
    </g>
    <path d="M8 1268.500H2496M8 1330H2496" stroke="#000" strokeWidth="1.500" strokeDasharray="4 4" />
    <polyline points={rsiPoints} fill="none" stroke="#b22a2e" strokeWidth="1.300" />
    <g stroke="#fb0d1b" strokeWidth="3" shapeRendering="crispEdges">
      <path d="M777 1270L2239 1251" />
      <path d="M1507 1302L1647 1315" />
    </g>
    <g fill="#111">
      <text x="14" y="1235" fontSize="12" xmlSpace="preserve">RSI(14) 40.25949  45.5932</text>
      {zoneLabels.map(([label, y]) => (
        <text key={label} x="9" y={y} fontSize="16">{label}</text>
      ))}
    </g>
    <rect x="2295" y="1221" width="201" height="23" fill="#e2f9f8" />
    <text x="2490" y="1239" fontSize="15" fill="#111" textAnchor="end">RSI(14) 40.25949 / 45.59317</text>
  </svg>
);

const ChartWindow = () => (
  <main className={`ml-px border-t-2 border-l-2 border-[#7c7c7c] bg-[#e2f9f8] pt-0.5 pl-0.5 text-[#111] ${TAHOMA}`}>
    <div className="flex">
      <div className="relative min-w-0 flex-1 border-2 border-b-0 border-[#1c2020]">
        <PriceChart />
        <p className="absolute top-[2px] left-1 flex items-center gap-[6px] text-[12px] leading-4">
          <svg viewBox="0 0 10 6" className="h-[6px] w-[10px]">
            <path d="M5 0l5 6H0z" fill="#000" />
          </svg>
          <span className="whitespace-pre">GBPCAD,H1   1.69330 1.69514 1.69252 1.69453</span>
          <span className="self-start text-[7px] leading-none text-[#2f9a2f]">VNID</span>
        </p>
        <QuickTrade />
        <StrategyPanel />
        <button
          type="button"
          aria-label="Abrir panel"
          className="absolute right-0 bottom-[43px] h-5 w-[13px] border-2 border-[#1f9a1f] border-r-[#58ee58] border-b-[#58ee58] bg-[#2bb52b] text-[10px] leading-4 text-white"
        >
          &lt;
        </button>
      </div>
      <PriceAxis />
    </div>
    <div className="flex">
      <div className="h-1 flex-1 border-y border-black bg-[#9fb0ae]" />
      <div className="w-[58px]" />
    </div>
    <div className="flex">
      <div className="min-w-0 flex-1 border-x-2 border-b-2 border-[#1c2020]">
        <RsiChart />
      </div>
      <div className="relative w-[58px] border-r-[3px] border-[#efefef] pl-1 text-[12px] leading-4">
        <p className="pt-px">100</p>
        <p className="mt-6">70</p>
        <p className="mt-[45px]">30</p>
        <p className="mt-[23px]">0</p>
      </div>
    </div>
    <div className="flex h-[26px] border-r-[3px] border-[#efefef] pl-0.5">
      <div className="grid w-[2048px] grid-cols-24 text-[12px] leading-4">
        {times.map((time) => (
          <div key={time} className="whitespace-nowrap">
            <span className="block h-1 w-px bg-black" />
            <span className="block">{time}</span>
          </div>
        ))}
      </div>
    </div>
  </main>
);

const ChartTabs = () => (
  <div className="border-t-[3px] border-[#f0f0f0] bg-[#f0f0f0]">
    <div className="flex h-[27px] items-start border-t-2 border-black pl-[7px] text-[15px] text-[#6d6d6d]">
      {tabs.map(([name, width], i) => {
        const active = name === "GBPCAD,H1";
        return (
          <button
            key={i}
            type="button"
            className={`${width} shrink-0 text-center leading-none ${
              active
                ? "-mt-0.5 h-[26px] border-2 border-t-0 border-black bg-white text-black"
                : "mt-px h-[18px] border-r border-[#6d6d6d]"
            }`}
          >
            {name}
          </button>
        );
      })}
      <div className="ml-auto flex items-center gap-5 pt-1 pr-3">
        <button type="button" aria-label="Pestañas anteriores">
          <svg viewBox="0 0 5 8" className="h-2 w-[5px]"><path d="M5 0v8L0 4z" fill="#777" /></svg>
        </button>
        <button type="button" aria-label="Pestañas siguientes">
          <svg viewBox="0 0 5 8" className="h-2 w-[5px]"><path d="M0 0v8l5-4z" fill="#777" /></svg>
        </button>
      </div>
    </div>
  </div>
);

const statusCells = [
  ["default", "w-[154px]"],
  ["2018.09.21 14:00", "w-[136px]"],
  ["O: 1.70192", "w-[95px]"],
  ["H: 1.70275", "w-[95px]"],
  ["L: 1.69530", "w-[91px]"],
  ["C: 1.69722", "w-[92px]"],
  ["V: 7282", "w-[89px]"],
];

const StatusBar = () => (
  <footer className="flex h-[30px] items-center border-t border-white bg-[#f0f0f0] pl-[3px] text-[14px] text-[#111]">
    <span className="flex-1 text-[15px]">Para obtener ayuda, pulse F1</span>
    {statusCells.map(([text, width]) => (
      <span key={text} className={`${width} h-6 border-l border-[#a8a8a8] pl-[7px] leading-6 whitespace-nowrap`}>
        {text}
      </span>
    ))}
    <span className="flex h-6 w-[198px] items-center gap-1 border-l border-[#a8a8a8] pl-[6px] whitespace-nowrap">
      <svg viewBox="0 0 32 18" className="h-[18px] w-8" aria-hidden="true">
        {[0, 1, 2, 3, 4, 5, 6, 7].map((n) => (
          <g key={n}>
            <rect x={n * 4} y="0" width="3" height={12 - n} fill="#6b8a2a" />
            <rect x={n * 4} y={13 - n} width="3" height={5 + n} fill="#1d4a70" />
          </g>
        ))}
      </svg>
      411673/338 kb
      <svg viewBox="0 0 20 20" className="mt-1 ml-auto h-5 w-5" stroke="#9a9a9a" aria-hidden="true">
        <path d="M1 20L20 1M6 20L20 6M11 20l9-9M16 20l4-4" />
      </svg>
    </span>
  </footer>
);

/* ---------- taskbar ---------- */

const apps = [
  ["Inicio", <path d="M5 8l10-1.500V15.500H5zM16.500 6.300L27 5v10.500H16.500zM5 17h10v8.500L5 24zM16.500 17H27v10l-10.500-1.500z" fill="#fff" />],
  [
    "Buscar",
    <g stroke="#fff" strokeWidth="1.700" fill="none">
      <circle cx="18.500" cy="12" r="6.500" />
      <path d="M14 17L6 26" />
    </g>,
  ],
  [
    "Vista de tareas",
    <g stroke="#fff" strokeWidth="1.600" fill="none">
      <path d="M6 6v3h13V6M6 26v-3h13v3" />
      <rect x="6" y="12" width="13" height="8" />
      <path d="M24 6v20M22 11h4" />
    </g>,
  ],
  [
    "Safari",
    <g>
      <circle cx="16" cy="16" r="12" fill="#2f7cc0" stroke="#c3cace" strokeWidth="2.500" />
      <circle cx="16" cy="16" r="9" fill="#62a8e0" />
      <path d="M7 16h2M23 16h2M16 7v2M16 23v2" stroke="#e8f4fc" />
      <path d="M22 9l-4 9-4-4z" fill="#e0483a" />
      <path d="M10 23l4-9 4 4z" fill="#f2f2f2" />
    </g>,
  ],
  [
    "Explorador",
    <g>
      <path d="M2 4h12l2 3h13v19H2z" fill="#f0b93a" />
      <path d="M2 7h28v20H2z" fill="#fbe08c" />
      <path d="M7 28V17h18v11h-4v-5H11v5z" fill="#38b0ea" />
    </g>,
  ],
  [
    "Tienda",
    <g>
      <path d="M11 9V5c0-5 10-5 10 0v4M14 8V5c0-3 6-3 6 0" stroke="#ddd" strokeWidth="1.500" fill="none" />
      <path d="M1 8h30v20q0 3-3 3H4q-3 0-3-3z" fill="#fff" />
      <path d="M9 12h6v7H9z" fill="#f25022" />
      <path d="M17 12h6v7h-6z" fill="#7fba00" />
      <path d="M9 20h6v7H9z" fill="#00a4ef" />
      <path d="M17 20h6v7h-6z" fill="#ffb900" />
    </g>,
  ],
  [
    "Escritorio remoto",
    <g>
      <path d="M2 1l27 2-2 19-20-2z" fill="#b9c6d6" />
      <path d="M4 3l23 1.500-2 15-17-1.500z" fill="#2a3fd8" />
      <path d="M4 3l9 .5 2 15-7-.6z" fill="#1524a0" />
      <path d="M7 25l9-3 8 3v4l-7 2-10-3z" fill="#c3c8cc" />
      <circle cx="24" cy="24" r="7" fill="#dfe8df" stroke="#8a9a8a" />
      <path d="M21 22l3 2-3 3M28 20l-3 3 3 2" stroke="#2f8a3a" strokeWidth="1.500" fill="none" />
    </g>,
  ],
  ["Edge", <FaEdgeLegacy x="2" y="2" size={28} color="#1c7fd8" />],
  [
    "TeamViewer",
    <g>
      <rect width="32" height="32" rx="1" fill="#1b7fe0" />
      <circle cx="16" cy="16" r="13" fill="#fff" />
      <path d="M4.500 16l7-5v3.500h9V11l7 5-7 5v-3.500h-9V21z" fill="#1372c8" />
    </g>,
  ],
  [
    "Forex",
    <g>
      <rect x=".5" y=".5" width="31" height="31" fill="#161616" stroke="#8a8a8a" />
      <path d="M1 1h30v12H1z" fill="#6a6a6a" />
      <path d="M1 28h30v3H1z" fill="#777" />
      <text x="1" y="18" fontSize="6" fill="#d02020">Tech</text>
      <text x="15" y="18" fontSize="6" fill="#ddd">Forex</text>
    </g>,
  ],
  [
    "MetaTrader",
    <g>
      <path d="M0 0h20v17H0zM18 18h14v13H18z" fill="#2a2a2a" />
      <path d="M31 0h-6l-9 12v5h9v6h6zM25 7v5h-4z" fill="#5fa62c" fillRule="evenodd" />
      <path d="M4 17h5l2 4 2-4h4l-4 7 4 7h-5l-2-4-2 4H3l5-7z" fill="#6ab83a" />
    </g>,
  ],
  [
    "Marcador",
    <g>
      <rect x="1" y="1" width="30" height="30" fill="#dfe2e4" stroke="#a8acb0" />
      <path d="M6 16l7 10L26 4" stroke="#1d4f78" strokeWidth="4.500" fill="none" />
    </g>,
  ],
  [
    "Correo",
    <g>
      <path d="M0 12L16 3l16 9v16H0z" fill="#fff" />
      <path d="M4 12h25L18 18l5 5-7-4z" fill="#111" />
    </g>,
  ],
  [
    "Sincronizar",
    <g>
      <circle cx="16" cy="16" r="8" fill="#3a7ae8" />
      <circle cx="15" cy="14" r="4" fill="#9cc8ff" />
      <path d="M11 3C-1 9 0 24 9 29M21 29c12-6 11-21 2-26" stroke="#47569a" strokeWidth="3.500" fill="none" />
      <path d="M6 1h8v7zM26 31h-8v-7z" fill="#2c3f9a" />
    </g>,
  ],
];

const appState = (name) => {
  if (name === "MetaTrader") return "w-16 bg-[#3b3b3b] border-[#76b9ed]";
  if (name === "Marcador" || name === "Sincronizar") return "w-[53px] border-[#76b9ed]";
  return "w-[53px] border-transparent";
};

const TrayIcon = ({ label, children }) => (
  <button type="button" aria-label={label}>
    <svg viewBox="0 0 24 24" className="h-6 w-6" fill="none" stroke="#fff" strokeWidth="1.500">
      {children}
    </svg>
  </button>
);

const Taskbar = () => (
  <div className="flex h-[53px] bg-[#070707] text-white">
    <div className="flex w-[914px] shrink-0">
      {apps.map(([name, art]) => (
        <div key={name} className="flex flex-1 justify-center">
          <button
            type="button"
            aria-label={name}
            className={`flex h-[53px] shrink-0 items-center justify-center border-b-[3px] ${appState(name)}`}
          >
            <svg viewBox="0 0 32 32" className="h-8 w-8">
              {art}
            </svg>
          </button>
        </div>
      ))}
    </div>
    <div className="ml-auto flex items-center">
      <div className="flex items-center gap-2 pr-4">
        <TrayIcon label="Contactos">
          <circle cx="8" cy="12" r="3" />
          <path d="M3 22c0-8 10-8 10 0" />
          <circle cx="16" cy="5" r="3" />
          <path d="M12 12c3-5 9-3 9 3" />
        </TrayIcon>
        <span className="w-2" />
        <TrayIcon label="Mostrar iconos ocultos">
          <path d="M4 16l8-8 8 8" />
        </TrayIcon>
        <TrayIcon label="Batería">
          <path d="M9 7h12v11H6v-4M22 10v4M2 4v3h5V4M4.500 7v6M3 2v3M6 2v3" />
        </TrayIcon>
        <TrayIcon label="Wi-Fi">
          <path d="M5 21C5 12 12 5 21 5" stroke="#777" />
          <path d="M9 21c0-6 5-12 12-12M13 21c0-4 3-8 8-8M17 21c0-2 1-4 4-4" />
        </TrayIcon>
        <TrayIcon label="Volumen">
          <path d="M2 9h4l5-5v16l-5-5H2zM14 9c1.500 2 1.500 4 0 6M17 6c3 4 3 8 0 12" />
          <path d="M20 3c4 6 4 12 0 18" stroke="#666" />
        </TrayIcon>
      </div>
      <span className="w-[30px] text-[14px]">ESP</span>
      <div className="w-[112px] text-center text-[14px] leading-6 whitespace-nowrap">
        <p>10:59</p>
        <p>2018. 10. 09.</p>
      </div>
      <button type="button" aria-label="Notificaciones" className="mr-[18px] ml-2">
        <svg viewBox="0 0 34 34" className="h-[34px] w-[34px]">
          <path d="M2 3h22v18H14l-4 6v-6H2z" fill="#fff" />
          <path d="M6 8h14M6 12h14M6 16h9" stroke="#111" strokeWidth="1.800" />
          <circle cx="23" cy="23" r="10" fill="#2e2e2e" stroke="#8a8a8a" />
          <text x="23" y="28" fontSize="15" textAnchor="middle" fill="#fff">1</text>
        </svg>
      </button>
      <span className="mr-1 h-full w-px bg-[#5a5a5a]" />
    </div>
  </div>
);

/* ---------- overlays ---------- */

const VolumeOverlay = () => (
  <div className="absolute top-[920px] left-1/2 h-[400px] w-[400px] -translate-x-1/2 rounded-[38px] bg-linear-165 from-[#dfedf0]/70 from-30% to-[#e4dcc4]/70">
    <svg viewBox="1080 920 400 400" className="h-full w-full" role="img" aria-label="Volumen">
      <path
        d="M1188 1070h30l32-26q4-3 4 3v100q0 6-4 3l-32-26h-30q-8 0-8-8v-38q0-8 8-8z"
        fill="#182420"
        fillOpacity=".46"
      />
      <g fill="none" stroke="#182420" strokeOpacity=".46" strokeWidth="9" strokeLinecap="round">
        <path d="M1288 1066A46 46 0 0 1 1288 1128" />
        <path d="M1319 1047A75 75 0 0 1 1319 1147" />
        <path d="M1350 1027A107 107 0 0 1 1350 1167" />
      </g>
      <rect x="1120" y="1264" width="322" height="16" fill="#2e2a10" fillOpacity=".6" />
      <g fill="#fff" fillOpacity=".9">
        {[0, 1, 2, 3, 4, 5, 6, 7, 8, 9].map((n) => (
          <rect key={n} x={1121 + n * 20} y="1266" width="19" height="12" />
        ))}
      </g>
    </svg>
  </div>
);

const RemoteTab = () => (
  <button type="button" aria-label="TeamViewer" className="absolute top-[990px] right-0">
    <svg viewBox="0 0 33 71" className="h-[71px] w-[33px]">
      <path d="M4 0h29v71L4 54q-4-3-4-6V5q0-5 4-5z" fill="#595959" />
      <rect x="5" y="8" width="27" height="27" fill="#063f6e" />
      <circle cx="18.500" cy="21.500" r="11.500" fill="#6a6a6a" />
      <path d="M8 21.500l6-4.500v3h9v-3l6 4.500-6 4.500v-3h-9v3z" fill="#0b3b66" />
    </svg>
  </button>
);

const ActivationNotice = () => (
  <div className="pointer-events-none absolute top-[1339px] left-[2060px] whitespace-nowrap text-[#9a9a9a]/60">
    <p className="text-[25px] leading-9">Aktiválja a Windowst</p>
    <p className="text-[19px] leading-6">Aktiválja a Windows rendszert a Gépházban.</p>
  </div>
);

export default function App() {
  return (
    <div className={`relative min-h-screen overflow-hidden bg-black pt-[84px] ${UI}`}>
      <div className="mr-0.5 border-2 border-l border-[#1b7fd6]">
        <TitleBar />
        <MenuBar />
        <Toolbars />
        <ChartWindow />
        <ChartTabs />
        <StatusBar />
      </div>
      <Taskbar />
      <VolumeOverlay />
      <ActivationNotice />
      <RemoteTab />
    </div>
  );
}
